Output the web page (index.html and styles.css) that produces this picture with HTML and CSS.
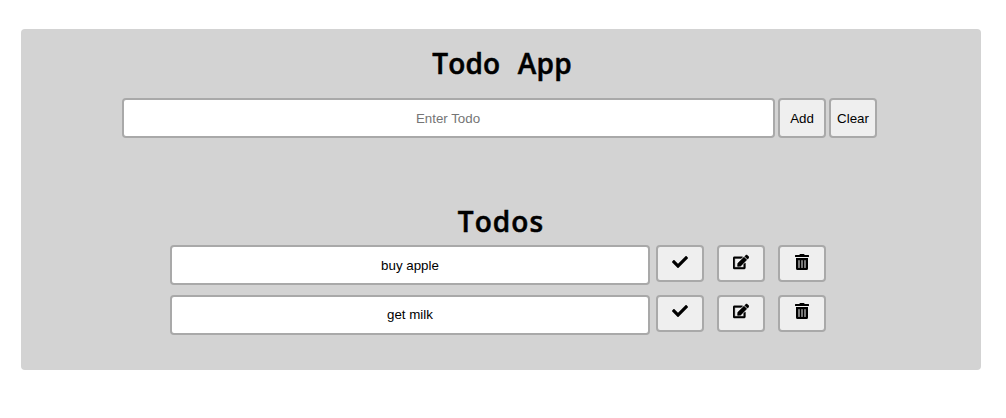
FILE: index.html
```html
<!DOCTYPE html>
<html lang="en">
<head>
<meta charset="utf-8">
<title>Todo App</title>
<link rel="stylesheet" href="styles.css">
</head>
<body>
<svg class="sprite" aria-hidden="true">
  <symbol id="check" viewBox="0 0 512 512"><path d="M173.9 439.4 7.5 273c-10-10-10-26.200 0-36.200l36.200-36.200c10-10 26.200-10 36.200 0L192 312.700 432.100 72.600c10-10 26.200-10 36.200 0l36.200 36.200c10 10 10 26.200 0 36.200L210.100 439.400c-10 10-26.200 10-36.200 0z"/></symbol>
  <symbol id="edit" viewBox="0 0 576 512"><path stroke="#000" stroke-width="14" d="M402.600 83.200l90.200 90.200c3.800 3.800 3.800 10 0 13.800L274.400 405.600l-92.800 10.300c-12.400 1.400-22.900-9.100-21.500-21.500l10.300-92.800L388.800 83.200c3.800-3.800 10-3.800 13.800 0zm162-22.900l-48.800-48.800c-15.200-15.200-39.900-15.200-55.200 0l-35.400 35.400c-3.800 3.800-3.800 10 0 13.800l90.200 90.200c3.800 3.800 10 3.800 13.800 0l35.400-35.400c15.200-15.300 15.200-40 0-55.200zM384 346.200V448H64V128h229.800c3.200 0 6.200-1.300 8.500-3.500l40-40c7.600-7.600 2.200-20.500-8.500-20.500H48C21.500 64 0 85.500 0 112v352c0 26.500 21.500 48 48 48h352c26.500 0 48-21.500 48-48V306.200c0-10.700-12.900-16-20.500-8.500l-40 40c-2.200 2.300-3.500 5.300-3.500 8.500z"/></symbol>
  <symbol id="trash" viewBox="0 0 448 512"><path d="M32 464a48 48 0 0 0 48 48h288a48 48 0 0 0 48-48V128H32zm272-256a16 16 0 0 1 32 0v224a16 16 0 0 1-32 0zm-96 0a16 16 0 0 1 32 0v224a16 16 0 0 1-32 0zm-96 0a16 16 0 0 1 32 0v224a16 16 0 0 1-32 0zM432 32H312l-9.400-18.700A24 24 0 0 0 281.100 0H166.800a23.700 23.700 0 0 0-21.400 13.300L136 32H16A16 16 0 0 0 0 48v32a16 16 0 0 0 16 16h416a16 16 0 0 0 16-16V48a16 16 0 0 0-16-16z"/></symbol>
</svg>
<main class="card">
  <h1 class="title">Todo App</h1>
  <form class="entry">
    <input class="field entry-input" type="text" placeholder="Enter Todo">
    <button class="btn" type="button">Add</button>
    <button class="btn" type="button">Clear</button>
  </form>
  <h1 class="title list-title">Todos</h1>
  <div class="list">
    <div class="row">
      <div class="field item">buy apple</div>
      <button class="btn action" aria-label="Done"><svg class="icon"><use href="#check"/></svg></button>
      <button class="btn action" aria-label="Edit"><svg class="icon"><use href="#edit"/></svg></button>
      <button class="btn action" aria-label="Delete"><svg class="icon"><use href="#trash"/></svg></button>
    </div>
    <div class="row row-last">
      <div class="field item">get milk</div>
      <button class="btn action" aria-label="Done"><svg class="icon"><use href="#check"/></svg></button>
      <button class="btn action" aria-label="Edit"><svg class="icon"><use href="#edit"/></svg></button>
      <button class="btn action" aria-label="Delete"><svg class="icon"><use href="#trash"/></svg></button>
    </div>
  </div>
</main>
</body>
</html>
```
FILE: styles.css
```css
* { box-sizing: border-box; }
body { margin: 0; background: #fff; font: 13.333px "Liberation Sans", Arial, sans-serif; color: #000; }
.sprite { display: none; }
.card { width: 960px; height: 341px; margin: 29px 0 0 21px; padding-top: 15px; background: #d3d3d3; border-radius: 4px; }
.title { margin: 0; height: 38px; padding-left: 2px; line-height: 38px; text-align: center; font-family: "Open Sans", "Noto Sans", sans-serif; font-size: 28px; font-weight: 600; letter-spacing: 0.2px; word-spacing: 10px; -webkit-text-stroke: 0.5px #000; }
.list-title { margin-top: 64px; padding-left: 0; letter-spacing: 1.1px; }
.entry { display: flex; gap: 3px; margin: 16px 0 0 101px; }
.field { height: 40px; border: 2px solid #a9a9a9; border-radius: 4px; background: #fff; padding: 0; text-align: center; font: inherit; line-height: 36px; }
.entry-input { width: 653px; padding-right: 1px; }
.entry-input::placeholder { color: #757575; }
.btn { width: 48px; height: 40px; border: 2px solid #a9a9a9; border-radius: 4px; background: #efefef; padding: 0; font: inherit; color: #000; }
.list { display: flex; flex-direction: column; gap: 10px; margin: 5px 0 0 149px; }
.row { display: flex; gap: 13px; align-items: flex-start; }
.item { width: 480px; margin-right: -7px; line-height: 37px; }
.action { display: flex; justify-content: center; height: 37px; padding-top: 7px; }
.row-last .action { padding-top: 6px; }
.row-last .item { line-height: 35px; }
.icon { width: 16px; height: 16px; fill: #000; }
```
